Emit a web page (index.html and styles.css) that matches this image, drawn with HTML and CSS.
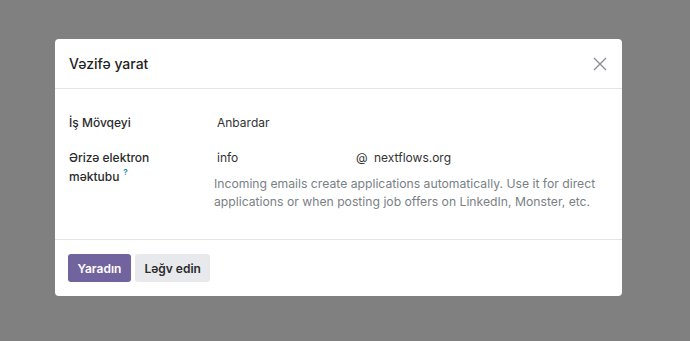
FILE: index.html
```html
<!DOCTYPE html>
<html lang="az">
  <head>
    <meta charset="UTF-8" />
    <title>Vəzifə yarat</title>
    <link rel="stylesheet" href="styles.css">
  </head>
  <body>
    <div class="backdrop">
      <div class="modal">
        <header class="modal-header">
          <h4>Vəzifə yarat</h4>
          <button class="close" aria-label="Close">
            <svg width="14" height="14" viewBox="0 0 14 14">
              <path d="M1 1 L13 13 M13 1 L1 13" stroke="#8a8f96" stroke-width="1.4" fill="none" />
            </svg>
          </button>
        </header>

        <section class="modal-body">
          <div class="field">
            <label>İş Mövqeyi</label>
            <div class="value">Anbardar</div>
          </div>
          <div class="field">
            <label>Ərizə elektron məktubu<sup class="help">?</sup></label>
            <div class="value">
              <div class="email">
                <span class="alias">info</span>
                <span class="at">@</span>
                <span>nextflows.org</span>
              </div>
              <p class="hint">Incoming emails create applications automatically. Use it for direct applications or when posting job offers on LinkedIn, Monster, etc.</p>
            </div>
          </div>
        </section>

        <footer class="modal-footer">
          <button class="btn btn-primary">Yaradın</button>
          <button class="btn btn-secondary">Ləğv edin</button>
        </footer>
      </div>
    </div>
  </body>
</html>
```
FILE: styles.css
```css
* {
  margin: 0;
  padding: 0;
  box-sizing: border-box;
  font-family: Inter, 'Liberation Sans', sans-serif;
}

body {
  background: #808080;
}

.backdrop {
  padding: 39px 68px 0 55px;
  height: 341px;
}

.modal {
  width: 567px;
  background: #fff;
  border-radius: 4px;
  color: #222;
}

/* Header */
.modal-header {
  display: flex;
  align-items: center;
  justify-content: space-between;
  height: 50px;
  padding: 0 15px 0 14px;
  border-bottom: 1px solid #e2e4e8;
}

.modal-header h4 {
  font-size: 14px;
  font-weight: 500;
  color: #1f1f1f;
}

.close {
  background: none;
  border: none;
  display: flex;
  cursor: pointer;
}

/* Body */
.modal-body {
  padding: 24px 14px 28px;
  display: flex;
  flex-direction: column;
  gap: 16px;
  border-bottom: 1px solid #e2e4e8;
}

.field {
  display: grid;
  grid-template-columns: 148px 1fr;
  font-size: 12px;
}

.field label {
  font-weight: 500;
  color: #2b2b2b;
  line-height: 19px;
  width: 110px;
}

.help {
  display: inline-block;
  margin-left: 4px;
  color: #2f8bb8;
  font-size: 8px;
  font-weight: 700;
  vertical-align: top;
  line-height: 10px;
}

.value {
  line-height: 19px;
  color: #333;
}

.email {
  display: flex;
}

.alias {
  width: 139px;
}

.at {
  width: 18px;
}

.hint {
  margin: 8px 0 0 -3px;
  font-size: 12.2px;
  line-height: 18px;
  color: #7a7f86;
}

/* Footer */
.modal-footer {
  display: flex;
  gap: 4px;
  padding: 14px 13px;
}

.btn {
  height: 28px;
  padding: 0 9.5px;
  border: none;
  border-radius: 3px;
  font-size: 12px;
  font-weight: 600;
  cursor: pointer;
}

.btn-primary {
  background: #71639e;
  color: #fff;
}

.btn-secondary {
  background: #e7e9ed;
  color: #2b2b2b;
}
```
